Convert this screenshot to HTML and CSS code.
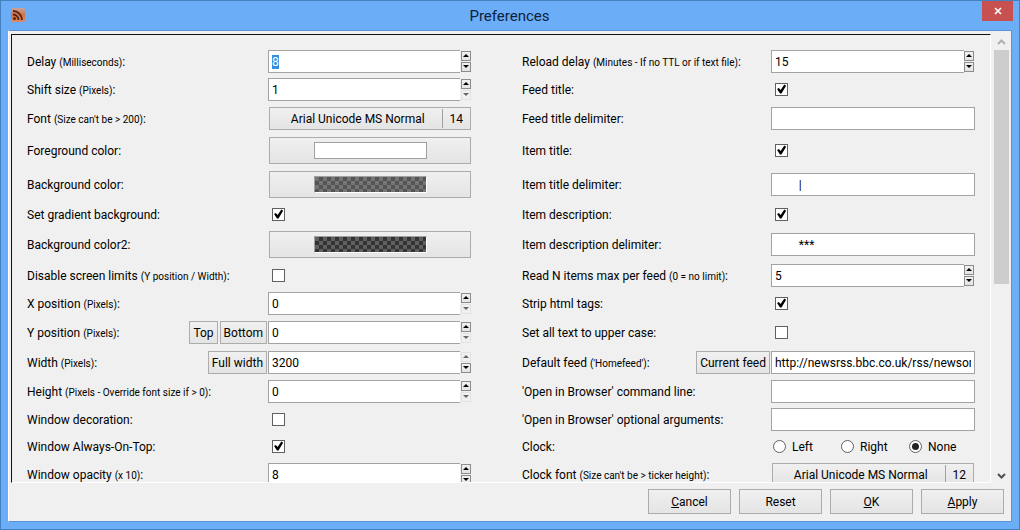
FILE: index.html
```html
<!DOCTYPE html>
<html lang="en">
<head>
    <meta charset="UTF-8">
    <title>Preferences</title>
    <link rel="stylesheet" href="styles.css">
</head>
<body>
<div class="window">
    <header class="titlebar">
        <svg class="app-icon" viewBox="0 0 14 14" width="14" height="14">
            <defs>
                <linearGradient id="rust" x1="0" y1="0" x2="0" y2="1">
                    <stop offset="0" stop-color="#c9a39b"/>
                    <stop offset="0.5" stop-color="#d0714a"/>
                    <stop offset="1" stop-color="#d98a68"/>
                </linearGradient>
            </defs>
            <rect width="14" height="14" rx="2" fill="url(#rust)"/>
            <circle cx="3.5" cy="10.5" r="1.5" fill="#5a2410"/>
            <path d="M2 6.5a5.5 5.5 0 0 1 5.500 5.500M2 3a9 9 0 0 1 9 9" fill="none" stroke="#5a2410" stroke-width="1.800"/>
        </svg>
        <h1>Preferences</h1>
        <button type="button" class="close" aria-label="Close">
            <svg viewBox="0 0 8 8" width="8" height="8"><path d="M1 1l6 6M7 1l-6 6" stroke="#fff" stroke-width="1.600"/></svg>
        </button>
    </header>

    <form class="client">
        <div class="scroller">
            <div class="panel">
                <div class="grid">
                    <div class="cell"><label for="delay">Delay <small>(Milliseconds)</small>:</label></div>
                    <div class="cell spin"><input type="text" id="delay" value="8"><span class="arrows"><button type="button" class="up" aria-label="Up"></button><button type="button" class="down" aria-label="Down"></button></span></div>
                    <div class="cell second"><label for="reload">Reload delay <small>(Minutes - If no TTL or if text file)</small>:</label></div>
                    <div class="cell spin"><input type="text" id="reload" value="15"><span class="arrows"><button type="button" class="up" aria-label="Up"></button><button type="button" class="down" aria-label="Down"></button></span></div>

                    <div class="cell"><label for="shift">Shift size <small>(Pixels)</small>:</label></div>
                    <div class="cell spin"><input type="text" id="shift" value="1"><span class="arrows"><button type="button" class="up" aria-label="Up"></button><button type="button" class="down" aria-label="Down" disabled></button></span></div>
                    <div class="cell second"><label for="feedTitle">Feed title:</label></div>
                    <div class="cell"><input type="checkbox" id="feedTitle" checked></div>

                    <div class="cell"><label for="font">Font <small>(Size can't be &gt; 200)</small>:</label></div>
                    <div class="cell tall"><button type="button" id="font" class="font-button"><span class="face">Arial Unicode MS Normal</span><span class="size">14</span></button></div>
                    <div class="cell second"><label for="feedDelimiter">Feed title delimiter:</label></div>
                    <div class="cell"><input type="text" id="feedDelimiter"></div>

                    <div class="cell"><label for="foreground">Foreground color:</label></div>
                    <div class="cell color"><button type="button" id="foreground" class="color-button"><span class="swatch"></span></button></div>
                    <div class="cell second"><label for="itemTitle">Item title:</label></div>
                    <div class="cell"><input type="checkbox" id="itemTitle" checked></div>

                    <div class="cell"><label for="background">Background color:</label></div>
                    <div class="cell color"><button type="button" id="background" class="color-button"><span class="swatch checker"></span></button></div>
                    <div class="cell second"><label for="itemDelimiter">Item title delimiter:</label></div>
                    <div class="cell"><input type="text" id="itemDelimiter" value="        |"></div>

                    <div class="cell short"><label for="gradient">Set gradient background:</label></div>
                    <div class="cell short"><input type="checkbox" id="gradient" checked></div>
                    <div class="cell short second"><label for="description">Item description:</label></div>
                    <div class="cell short"><input type="checkbox" id="description" checked></div>

                    <div class="cell"><label for="background2">Background color2:</label></div>
                    <div class="cell color"><button type="button" id="background2" class="color-button"><span class="swatch checker dark"></span></button></div>
                    <div class="cell second"><label for="descDelimiter">Item description delimiter:</label></div>
                    <div class="cell"><input type="text" id="descDelimiter" value="        ***"></div>

                    <div class="cell"><label for="limits">Disable screen limits <small>(Y position / Width)</small>:</label></div>
                    <div class="cell"><input type="checkbox" id="limits"></div>
                    <div class="cell second"><label for="maxItems">Read N items max per feed <small>(0 = no limit)</small>:</label></div>
                    <div class="cell spin"><input type="text" id="maxItems" value="5"><span class="arrows"><button type="button" class="up" aria-label="Up"></button><button type="button" class="down" aria-label="Down"></button></span></div>

                    <div class="cell"><label for="xPos">X position <small>(Pixels)</small>:</label></div>
                    <div class="cell spin"><input type="text" id="xPos" value="0"><span class="arrows"><button type="button" class="up" aria-label="Up"></button><button type="button" class="down" aria-label="Down" disabled></button></span></div>
                    <div class="cell second"><label for="stripTags">Strip html tags:</label></div>
                    <div class="cell"><input type="checkbox" id="stripTags" checked></div>

                    <div class="cell tall"><label for="yPos">Y position <small>(Pixels)</small>:</label><span class="side"><button type="button">Top</button><button type="button">Bottom</button></span></div>
                    <div class="cell spin"><input type="text" id="yPos" value="0"><span class="arrows"><button type="button" class="up" aria-label="Up"></button><button type="button" class="down" aria-label="Down" disabled></button></span></div>
                    <div class="cell second"><label for="upperCase">Set all text to upper case:</label></div>
                    <div class="cell"><input type="checkbox" id="upperCase"></div>

                    <div class="cell tall"><label for="width">Width <small>(Pixels)</small>:</label><span class="side"><button type="button">Full width</button></span></div>
                    <div class="cell spin"><input type="text" id="width" value="3200"><span class="arrows"><button type="button" class="up" aria-label="Up" disabled></button><button type="button" class="down" aria-label="Down"></button></span></div>
                    <div class="cell second"><label for="homefeed">Default feed <small>('Homefeed')</small>:</label><span class="side"><button type="button">Current feed</button></span></div>
                    <div class="cell"><input type="text" id="homefeed" value="http://newsrss.bbc.co.uk/rss/newsonline_world_edition/front_page/rss.xml"></div>

                    <div class="cell"><label for="height">Height <small>(Pixels - Override font size if &gt; 0)</small>:</label></div>
                    <div class="cell spin"><input type="text" id="height" value="0"><span class="arrows"><button type="button" class="up" aria-label="Up"></button><button type="button" class="down" aria-label="Down" disabled></button></span></div>
                    <div class="cell second"><label for="command">'Open in Browser' command line:</label></div>
                    <div class="cell"><input type="text" id="command"></div>

                    <div class="cell"><label for="decoration">Window decoration:</label></div>
                    <div class="cell"><input type="checkbox" id="decoration"></div>
                    <div class="cell second"><label for="arguments">'Open in Browser' optional arguments:</label></div>
                    <div class="cell"><input type="text" id="arguments"></div>

                    <div class="cell short"><label for="onTop">Window Always-On-Top:</label></div>
                    <div class="cell short"><input type="checkbox" id="onTop" checked></div>
                    <div class="cell short second"><span id="clockLabel">Clock:</span></div>
                    <div class="cell short radios" role="radiogroup" aria-labelledby="clockLabel">
                        <label><input type="radio" name="clock" value="left"><span>Left</span></label>
                        <label><input type="radio" name="clock" value="right"><span>Right</span></label>
                        <label><input type="radio" name="clock" value="none" checked><span>None</span></label>
                    </div>

                    <div class="cell"><label for="opacity">Window opacity <small>(x 10)</small>:</label></div>
                    <div class="cell spin"><input type="text" id="opacity" value="8"><span class="arrows"><button type="button" class="up" aria-label="Up"></button><button type="button" class="down" aria-label="Down"></button></span></div>
                    <div class="cell second"><label for="clockFont">Clock font <small>(Size can't be &gt; ticker height)</small>:</label></div>
                    <div class="cell tall"><button type="button" id="clockFont" class="font-button"><span class="face">Arial Unicode MS Normal</span><span class="size">12</span></button></div>
                </div>
            </div>
            <div class="scrollbar">
                <svg viewBox="0 0 9 6" width="9" height="6"><path d="M1 5l3.500-3.500L8 5" fill="none" stroke="#b0b0b0" stroke-width="2"/></svg>
                <div class="track"><div class="thumb"></div></div>
                <svg viewBox="0 0 9 6" width="9" height="6"><path d="M1 1l3.500 3.500L8 1" fill="none" stroke="#505050" stroke-width="2"/></svg>
            </div>
        </div>
        <div class="actions">
            <button type="button"><u>C</u>ancel</button>
            <button type="reset">Reset</button>
            <button type="submit"><u>O</u>K</button>
            <button type="button"><u>A</u>pply</button>
        </div>
    </form>
</div>

<script>
document.getElementById('delay').select();
</script>
</body>
</html>
```

FILE: styles.css
```css
* {
    box-sizing: border-box;
}

body {
    margin: 0;
    font-family: Roboto, "Open Sans", sans-serif;
    font-size: 12px;
    line-height: 17px;
    color: #000;
}

button,
input {
    font: inherit;
    color: inherit;
    margin: 0;
    border-radius: 0;
}

button {
    padding: 0;
    border: 1px solid #acacac;
    background: linear-gradient(#f0f0f0, #e4e4e4);
    white-space: nowrap;
}

small {
    font-size: 10px;
}

/* window frame */
.window {
    display: flex;
    flex-direction: column;
    height: 100vh;
    padding: 0 7px 7px;
    background: #6badf6;
    border: 1px solid #4580c0;
}

.titlebar {
    display: flex;
    justify-content: space-between;
    height: 29px;
    flex: none;
}

.app-icon {
    margin: 7px 0 0 3px;
}

h1 {
    margin: 5px 0 0 12px;
    font-size: 15px;
    line-height: 20px;
    font-weight: normal;
    color: #0c2340;
}

.close {
    display: flex;
    align-items: center;
    justify-content: center;
    width: 31px;
    height: 20px;
    margin-right: -1px;
    border: none;
    background: #c75050;
}

.client {
    display: flex;
    flex-direction: column;
    flex: 1;
    min-height: 0;
    padding: 3px 2px 0;
    background: #f0f0f0;
    border: 1px solid #5a93d6;
    border-left-color: #fff;
}

.scroller {
    display: flex;
    flex: 1;
    min-height: 0;
}

/* sunken panel */
.panel {
    flex: 1;
    min-width: 0;
    overflow: hidden;
    border: 1px solid #fff;
    border-top: 1px solid #111;
    border-left-color: #111;
    padding: 12px 15px 0 15px;
}

.grid {
    display: grid;
    grid-template-columns: 241px 203px minmax(0, 1fr) 204px;
}

.cell {
    display: flex;
    align-items: center;
    justify-content: space-between;
    min-height: 28px;
    white-space: nowrap;
}

.cell.short {
    min-height: 26px;
}

.cell.tall {
    min-height: 30px;
}

.cell.color {
    min-height: 34px;
}

.cell > label,
.cell > #clockLabel,
.radios span {
    padding-top: 2px;
}

.second {
    padding-left: 51px;
}

.side {
    display: flex;
    gap: 2px;
    margin-right: 1px;
}

.side button {
    height: 23px;
    padding: 2px 3px 0;
}

input[type="text"] {
    flex: 1;
    min-width: 0;
    height: 23px;
    padding: 2px 3px 0;
    border: 1px solid #a3a3a3;
    background: #fff;
    outline: none;
}

input::selection {
    background: #3390e0;
    color: #fff;
}

.spin input[type="text"] {
    border-right: none;
}

.arrows {
    display: flex;
    flex-direction: column;
    gap: 1px;
    width: 10px;
    margin-left: 1px;
}

.second + .spin .arrows {
    margin: 0 1px 0 0;
}

.arrows button {
    display: flex;
    align-items: center;
    justify-content: center;
    height: 10px;
    border-color: #8c8c8c;
}

.arrows button::before {
    content: "";
    border: 3px solid transparent;
}

.arrows .up::before {
    border-top: none;
    border-bottom-color: #000;
}

.arrows .down::before {
    border-bottom: none;
    border-top-color: #000;
}

.arrows button:disabled {
    border-color: #e2e2e2;
    background: #f0f0f0;
}

.arrows .up:disabled::before {
    border-bottom-color: #666;
}

.arrows .down:disabled::before {
    border-top-color: #666;
}

.font-button,
.color-button {
    display: flex;
    flex: 1;
    align-items: center;
    margin: 0 0 0 1px;
}

.font-button {
    height: 23px;
}

.second + .cell .font-button {
    margin-right: 1px;
}

.face {
    flex: 1;
    padding: 2px 0 0 4px;
}

.size {
    padding: 2px 7px 0;
    border-left: 1px solid #a0a0a0;
}

.color-button {
    justify-content: center;
    height: 27px;
}

.swatch {
    width: 113px;
    height: 17px;
    border: 1px solid #a0a0a0;
    background: #fff;
}

.checker {
    padding: 1px;
    background: conic-gradient(#555 25%, #757575 0 50%, #555 0 75%, #757575 0) 0 0 / 8px 8px;
    border-right-color: #fff;
    border-bottom-color: #fff;
}

.dark {
    background-image: conic-gradient(#333 25%, #606060 0 50%, #333 0 75%, #606060 0);
}

input[type="checkbox"],
input[type="radio"] {
    appearance: none;
    width: 13px;
    height: 13px;
    border: 1px solid #606060;
    background: #fff;
}

input[type="checkbox"] {
    margin-left: 4px;
}

input[type="checkbox"]:checked::before {
    content: "";
    display: block;
    width: 11px;
    height: 11px;
    background: #000;
    clip-path: polygon(10% 50%, 26% 40%, 42% 60%, 76% 10%, 92% 20%, 50% 92%, 36% 92%);
}

input[type="radio"] {
    border-radius: 50%;
}

input[type="radio"]:checked::before {
    content: "";
    display: block;
    width: 7px;
    height: 7px;
    margin: 2px;
    border-radius: 50%;
    background: #222;
}

.radios {
    justify-content: flex-start;
}

.cell.radios > label {
    display: flex;
    flex: none;
    align-items: center;
    gap: 6px;
    width: 68px;
    padding: 0 0 0 2px;
}

/* scrollbar */
.scrollbar {
    display: flex;
    flex-direction: column;
    align-items: center;
    width: 18px;
    padding: 5px 0 4px 2px;
}

.track {
    flex: 1;
    width: 15px;
    margin: 5px 0;
}

.thumb {
    height: 56%;
    background: #cdcdcd;
}

.actions {
    display: flex;
    justify-content: flex-end;
    gap: 8px;
    padding: 6px 5px 7px;
}

.actions button {
    width: 83px;
    height: 25px;
    padding-top: 2px;
}
```
